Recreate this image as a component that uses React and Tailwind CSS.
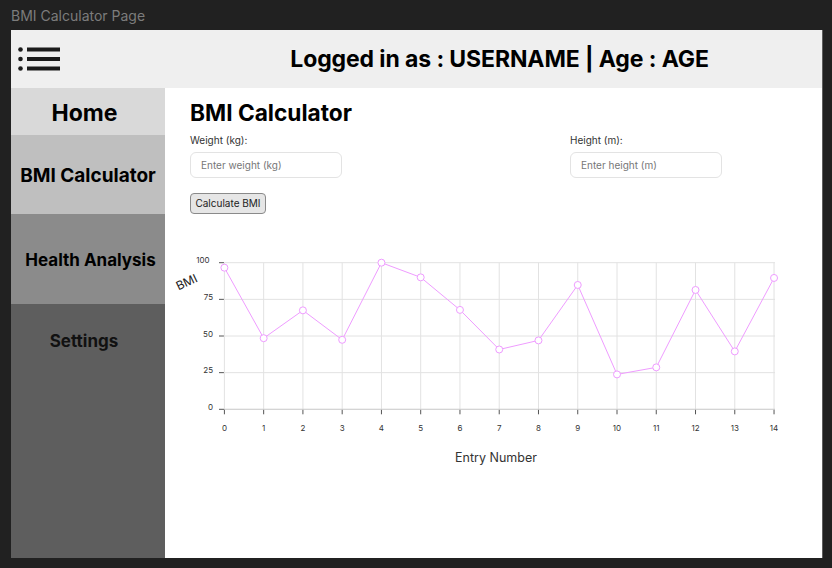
const data = [96.6, 48.5, 67.5, 47.4, 100, 90, 67.8, 40.8, 47, 84.8, 23.8, 28.6, 81.4, 39.5, 89.6];

const X0 = 224.4;
const XS = 39.26;
const Y0 = 409.3;
const YS = 1.466;
const px = (i) => X0 + i * XS;
const py = (v) => Y0 - v * YS;

function Chart() {
  const pts = data.map((v, i) => `${px(i)},${py(v)}`).join(" ");
  const yTicks = [0, 25, 50, 75, 100];
  return (
    <svg width="607" height="240" className="overflow-visible block" style={{ fontFamily: "Inter, sans-serif" }}>
      <g transform="translate(-190,-235)">
        {yTicks.map((t) => (
          <g key={t}>
            <line x1={X0} x2={775} y1={py(t)} y2={py(t)} stroke="#e2e2e2" strokeWidth="1" />
            <line x1={219} x2={224} y1={py(t)} y2={py(t)} stroke="#555" strokeWidth="1" />
            <text x={t === 100 ? 209.5 : 213} y={py(t) - 1.5} fontSize="8" fill="#333" textAnchor="end" dominantBaseline="middle">
              {t}
            </text>
          </g>
        ))}
        {data.map((_, i) => (
          <g key={i}>
            <line x1={px(i)} x2={px(i)} y1={py(100)} y2={Y0} stroke="#e2e2e2" strokeWidth="1" />
            <line x1={px(i)} x2={px(i)} y1={Y0} y2={Y0 + 5} stroke="#555" strokeWidth="1" />
            <text x={px(i)} y={428.5} fontSize="8" fill="#333" textAnchor="middle" dominantBaseline="middle">
              {i}
            </text>
          </g>
        ))}
        <line x1={X0} x2={775} y1={Y0} y2={Y0} stroke="#d0d0d0" strokeWidth="1" />
        <polyline points={pts} fill="none" stroke="#ef9cff" strokeWidth="1" />
        {data.map((v, i) => (
          <circle key={i} cx={px(i)} cy={py(v)} r="3.5" fill="#fff" stroke="#ef9cff" strokeWidth="1" />
        ))}
        <text x={187} y={283} fontSize="12" fill="#222" textAnchor="middle" dominantBaseline="middle" transform="rotate(-25 187 283)">
          BMI
        </text>
        <text x={496} y={458.5} fontSize="12.5" fill="#333" textAnchor="middle" dominantBaseline="middle">
          Entry Number
        </text>
      </g>
    </svg>
  );
}

function Hamburger() {
  return (
    <svg width="44" height="26" viewBox="0 0 44 26">
      <circle cx="2.5" cy="3.5" r="2.3" fill="#1b1b1b" />
      <circle cx="2.5" cy="13" r="2.3" fill="#1b1b1b" />
      <circle cx="2.5" cy="22.5" r="2.3" fill="#1b1b1b" />
      <rect x="9" y="1.5" width="33" height="4" fill="#1b1b1b" />
      <rect x="9" y="11" width="33" height="4" fill="#1b1b1b" />
      <rect x="9" y="20.5" width="33" height="4" fill="#1b1b1b" />
    </svg>
  );
}

export default function App() {
  return (
    <div className="w-[832px] h-[568px] bg-[#212121] overflow-hidden flex flex-col" style={{ fontFamily: "Inter, 'Liberation Sans', sans-serif" }}>
      <div className="h-[30px] flex items-center pl-[11px] text-[14px] text-[#7c7c7c]">BMI Calculator Page</div>
      <div className="ml-[11px] w-[812px] h-[528px] flex flex-col border-r border-[#5e5e5e]">
        <div className="h-[58px] bg-[#efefef] flex items-center">
          <div className="w-[166px] pl-[7px] flex items-center">
            <Hamburger />
          </div>
          <div className="flex-1 flex justify-center text-[23px] font-bold text-black tracking-[-0.1px] pt-[1px]">
            Logged in as : USERNAME | Age : AGE
          </div>
        </div>
        <div className="flex flex-1">
          <div className="w-[154px] flex flex-col font-bold text-black">
            <div className="h-[47px] bg-[#d9d9d9] flex items-center justify-center pr-[7px] pt-[3px] text-[23px]">Home</div>
            <div className="h-[79px] bg-[#bfbfbf] flex items-center justify-center pt-[3px] text-[19px]">BMI Calculator</div>
            <div className="h-[90px] bg-[#8b8b8b] flex items-center justify-center pl-[5px] pt-[3px] text-[17px]">Health Analysis</div>
            <div className="flex-1 bg-[#5e5e5e] flex justify-center pt-[25px] pr-[8px] text-[17px] text-[#111]">Settings</div>
          </div>
          <div className="flex-1 bg-white px-[25px] pt-[11px] flex flex-col">
            <div className="text-[22.7px] leading-[27px] font-bold text-black">BMI Calculator</div>
            <div className="grid grid-cols-[380px_1fr] mt-[7px]">
              <div className="flex flex-col">
                <div className="text-[10px] leading-[14px] text-[#333]">Weight (kg):</div>
                <div className="mt-[5px] w-[152px] h-[26px] border border-[#e3e3e3] rounded-[6px] flex items-center pl-[10px] text-[10px] text-[#777]">
                  Enter weight (kg)
                </div>
              </div>
              <div className="flex flex-col">
                <div className="text-[10px] leading-[14px] text-[#333]">Height (m):</div>
                <div className="mt-[5px] w-[152px] h-[26px] border border-[#e3e3e3] rounded-[6px] flex items-center pl-[10px] text-[10px] text-[#777]">
                  Enter height (m)
                </div>
              </div>
            </div>
            <div className="mt-[15px] flex">
              <div className="flex items-center justify-center w-[76px] h-[21px] bg-[#e6e6e6] border border-[#8a8a8a] rounded-[4px] text-[10px] text-[#222]">
                Calculate BMI
              </div>
            </div>
            <div className="mt-[21px]">
              <Chart />
            </div>
          </div>
        </div>
      </div>
    </div>
  );
}
